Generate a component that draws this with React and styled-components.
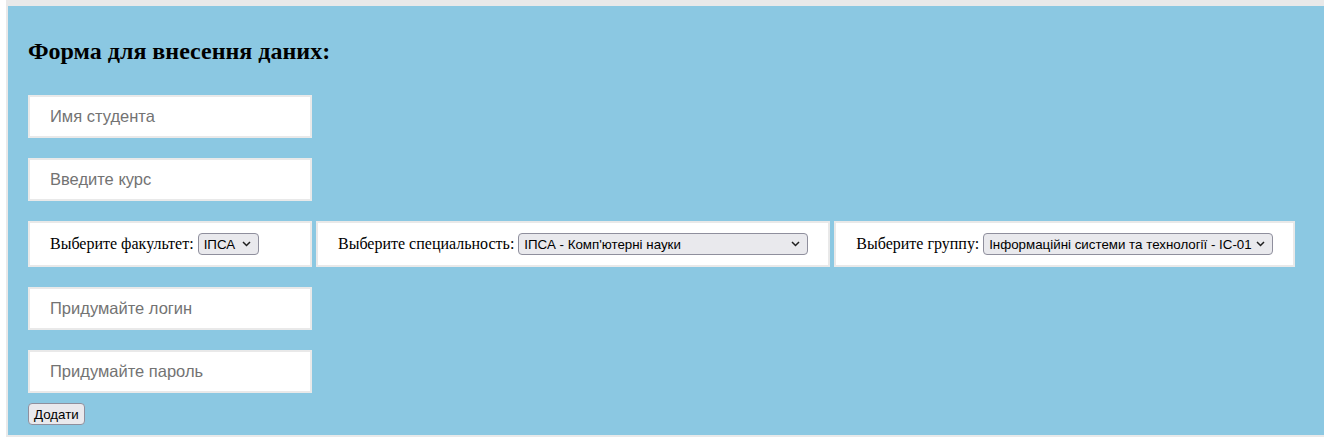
import React from "react"
import styled, { createGlobalStyle } from 'styled-components'

const GlobalStyle = createGlobalStyle`
  body {
    margin: 0;
    background: #ffffff;
    font-family: 'Liberation Serif', 'Times New Roman', serif;
  }
`

const Wrapper = styled.form`
  margin-left: 6px;
  border: 2px solid #e9e9e9;
  border-top-width: 6px;
  border-right: none;
  background: #8bc8e2;
  padding: 10px 20px 10px 20px;
  display: flex;
  flex-direction: column;
  align-items: flex-start;
`

const Title = styled.h2`
  font-family: 'Liberation Serif', 'Times New Roman', serif;
  font-size: 24px;
  font-weight: bold;
  line-height: 27px;
  margin: 22px 0 30px;
  color: #000;
`

const Field = styled.input`
  box-sizing: border-box;
  width: 284px;
  height: 43px;
  padding: 10px 20px;
  border: 2px solid #e9e9e9;
  background: #fff;
  font-family: 'Liberation Sans', Arial, sans-serif;
  font-size: 16.5px;
  color: #000;
  outline: none;
  margin-bottom: 20px;

  &::placeholder {
    color: #737373;
  }
`

const SelectRow = styled.div`
  display: flex;
  gap: 4px;
  margin-bottom: 20px;
`

const SelectBox = styled.div`
  box-sizing: border-box;
  height: 46px;
  min-width: 284px;
  padding: 10px 20px;
  border: 2px solid #e9e9e9;
  background: #fff;
  display: flex;
  align-items: center;
  gap: 4px;
  font-size: 16px;
  color: #000;
`

const SelectWrap = styled.span`
  position: relative;
  display: inline-block;
`

const Select = styled.select`
  appearance: none;
  box-sizing: border-box;
  width: ${p => p.$w}px;
  height: 22px;
  padding: 0 20px 0 5px;
  border: 1px solid #8f8f9d;
  border-radius: 4px;
  background: #e9e9ed;
  font-family: 'Liberation Sans', Arial, sans-serif;
  font-size: 13.33px;
  color: #000;
`

const Chevron = styled.svg`
  position: absolute;
  right: 8px;
  top: 8px;
  pointer-events: none;
`

const Button = styled.button`
  box-sizing: border-box;
  height: 22px;
  padding: 0 5px;
  border: 1px solid #8f8f9d;
  border-radius: 4px;
  background: #e9e9ed;
  font-family: 'Liberation Sans', Arial, sans-serif;
  font-size: 13.33px;
  color: #000;
  margin-top: -10px;
`

const Dropdown = ({ w, value }) => (
  <SelectWrap>
    <Select $w={w} defaultValue={value}>
      <option>{value}</option>
    </Select>
    <Chevron width="9" height="6" viewBox="0 0 9 6">
      <path d="M1 1 L4.5 4.5 L8 1" fill="none" stroke="#1f1f1f" strokeWidth="1.5" />
    </Chevron>
  </SelectWrap>
)

export default function App() {
  return (
    <>
      <GlobalStyle />
      <Wrapper onSubmit={e => e.preventDefault()}>
        <Title>Форма для внесення даних:</Title>

        <Field placeholder="Имя студента" />
        <Field placeholder="Введите курс" />

        <SelectRow>
          <SelectBox>
            Выберите факультет:
            <Dropdown w={61} value="ІПСА" />
          </SelectBox>
          <SelectBox>
            Выберите специальность:
            <Dropdown w={290} value="ІПСА - Комп'ютерні науки" />
          </SelectBox>
          <SelectBox>
            Выберите группу:
            <Dropdown w={290} value="Інформаційні системи та технології - ІС-01" />
          </SelectBox>
        </SelectRow>

        <Field placeholder="Придумайте логин" />
        <Field placeholder="Придумайте пароль" />

        <Button type="submit">Додати</Button>
      </Wrapper>
    </>
  )
}
